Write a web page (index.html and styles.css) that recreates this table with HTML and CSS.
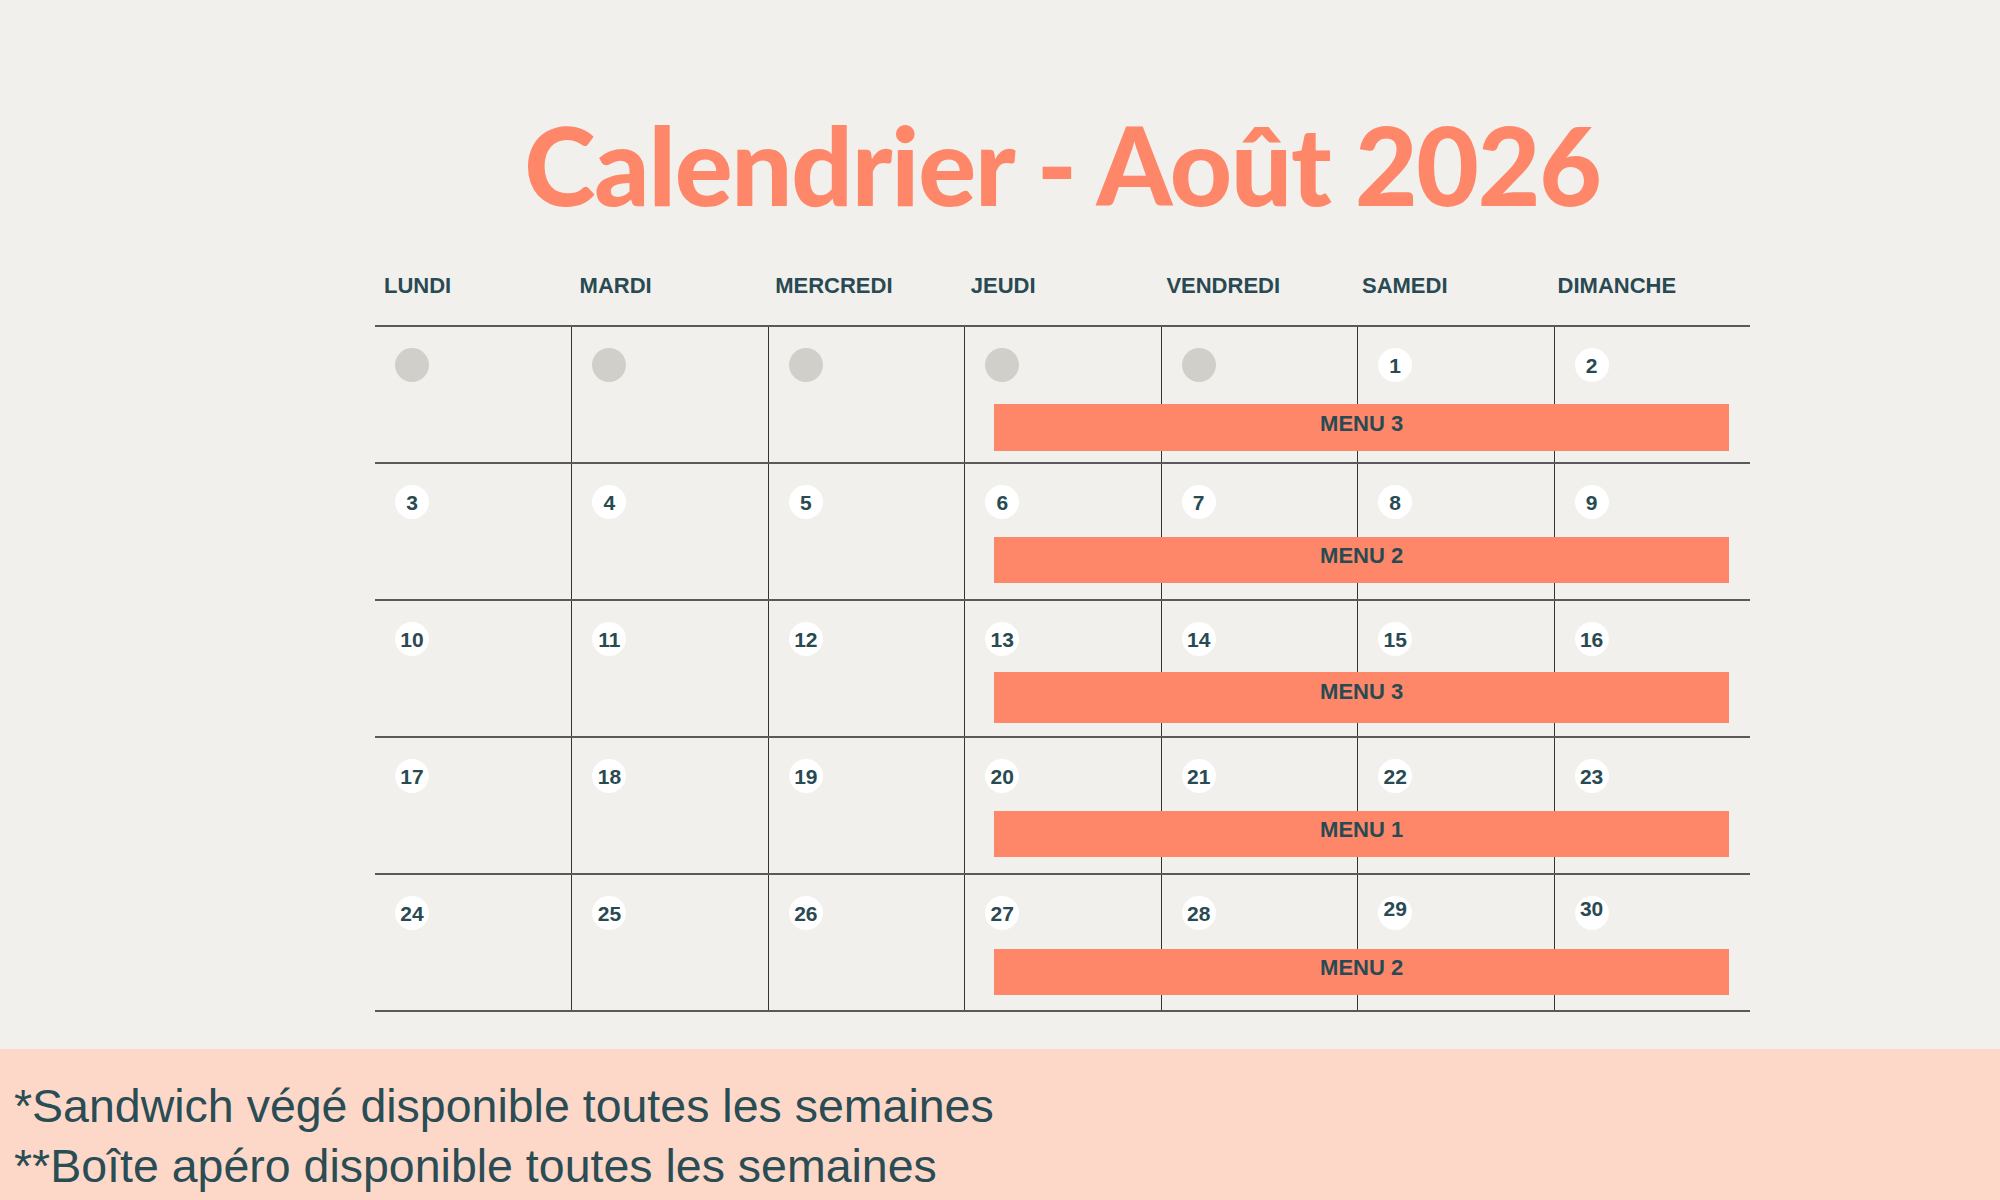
FILE: index.html
```html
<!DOCTYPE html>
<html lang="fr">
<head>
<meta charset="utf-8">
<title>Calendrier - Août 2026</title>
<link rel="stylesheet" href="styles.css">
</head>
<body>
<main class="page">
  <section class="calendar">
    <h1 class="title">Calendrier - Août 2026</h1>
    <div class="days">
      <div class="day-name">LUNDI</div>
      <div class="day-name">MARDI</div>
      <div class="day-name">MERCREDI</div>
      <div class="day-name">JEUDI</div>
      <div class="day-name">VENDREDI</div>
      <div class="day-name">SAMEDI</div>
      <div class="day-name">DIMANCHE</div>
    </div>
    <div class="weeks">
      <div class="week">
        <div class="cells">
          <div class="cell"><span class="num num--empty"></span></div>
          <div class="cell"><span class="num num--empty"></span></div>
          <div class="cell"><span class="num num--empty"></span></div>
          <div class="cell"><span class="num num--empty"></span></div>
          <div class="cell"><span class="num num--empty"></span></div>
          <div class="cell"><span class="num">1</span></div>
          <div class="cell"><span class="num">2</span></div>
        </div>
        <div class="menu menu--w1">MENU 3</div>
      </div>
      <div class="week">
        <div class="cells">
          <div class="cell"><span class="num">3</span></div>
          <div class="cell"><span class="num">4</span></div>
          <div class="cell"><span class="num">5</span></div>
          <div class="cell"><span class="num">6</span></div>
          <div class="cell"><span class="num">7</span></div>
          <div class="cell"><span class="num">8</span></div>
          <div class="cell"><span class="num">9</span></div>
        </div>
        <div class="menu menu--w2">MENU 2</div>
      </div>
      <div class="week">
        <div class="cells">
          <div class="cell"><span class="num">10</span></div>
          <div class="cell"><span class="num">11</span></div>
          <div class="cell"><span class="num">12</span></div>
          <div class="cell"><span class="num">13</span></div>
          <div class="cell"><span class="num">14</span></div>
          <div class="cell"><span class="num">15</span></div>
          <div class="cell"><span class="num">16</span></div>
        </div>
        <div class="menu menu--w3">MENU 3</div>
      </div>
      <div class="week">
        <div class="cells">
          <div class="cell"><span class="num">17</span></div>
          <div class="cell"><span class="num">18</span></div>
          <div class="cell"><span class="num">19</span></div>
          <div class="cell"><span class="num">20</span></div>
          <div class="cell"><span class="num">21</span></div>
          <div class="cell"><span class="num">22</span></div>
          <div class="cell"><span class="num">23</span></div>
        </div>
        <div class="menu menu--w4">MENU 1</div>
      </div>
      <div class="week">
        <div class="cells">
          <div class="cell"><span class="num">24</span></div>
          <div class="cell"><span class="num">25</span></div>
          <div class="cell"><span class="num">26</span></div>
          <div class="cell"><span class="num">27</span></div>
          <div class="cell"><span class="num">28</span></div>
          <div class="cell"><span class="num num--raised">29</span></div>
          <div class="cell"><span class="num num--raised">30</span></div>
        </div>
        <div class="menu menu--w5">MENU 2</div>
      </div>
    </div>
  </section>
  <footer class="notes">
    <p class="note">*Sandwich végé disponible toutes les semaines</p>
    <p class="note">**Boîte apéro disponible toutes les semaines</p>
  </footer>
</main>
</body>
</html>
```

FILE: styles.css
```css
html, body {
  margin: 0;
  padding: 0;
  background: #f2f0ec;
}

.page {
  width: 2000px;
  height: 1200px;
  display: flex;
  flex-direction: column;
  overflow: hidden;
  font-family: "Liberation Sans", Arial, sans-serif;
  color: #294a52;
}

.calendar {
  width: 1375px;
  margin-left: 375px;
  padding-top: 110px;
  height: 1013px;
  box-sizing: border-box;
}

.title {
  margin: 0;
  text-align: center;
  font-family: "Lato", "Liberation Sans", sans-serif;
  font-weight: 900;
  font-size: 108px;
  line-height: 108px;
  letter-spacing: -1.2px;
  color: #fe8769;
  height: 108px;
}

.days {
  display: grid;
  grid-template-columns: repeat(7, 195.6px);
  margin-top: 57px;
  padding: 0 0 28px 9px;
  border-bottom: 2px solid #5a5a5a;
}

.day-name {
  font-weight: 700;
  font-size: 22px;
  line-height: 22px;
  color: #294a52;
}

.week {
  display: grid;
  grid-template-columns: 1fr;
  grid-template-rows: 135px;
  border-bottom: 2px solid #5a5a5a;
}

.cells {
  grid-area: 1 / 1;
  display: grid;
  grid-template-columns: repeat(7, 1fr);
}

.cell {
  padding: 21px 0 0 20px;
  min-width: 0;
}

.cell + .cell {
  border-left: 1px solid #333;
}

.num {
  display: flex;
  align-items: center;
  justify-content: center;
  width: 34px;
  height: 34px;
  border-radius: 50%;
  background: #ffffff;
  font-weight: 700;
  font-size: 21px;
  line-height: 1;
  color: #294a52;
}

.num--empty {
  background: #d1cfca;
}

.num--raised {
  padding-bottom: 9px;
  box-sizing: border-box;
}

.menu {
  grid-area: 1 / 1;
  align-self: start;
  margin: 74px 21px 0 calc(300% / 7 + 30px);
  height: 46px;
  background: #fe8769;
  display: flex;
  align-items: center;
  justify-content: center;
  padding-bottom: 8px;
  box-sizing: border-box;
  font-weight: 700;
  font-size: 22px;
  line-height: 1;
  color: #294a52;
}

.menu--w1 { margin-top: 77px; height: 47px; }
.menu--w2 { margin-top: 73px; }
.menu--w3 { margin-top: 71px; height: 51px; padding-bottom: 11px; }
.menu--w4 { margin-top: 73px; }
.menu--w5 { margin-top: 74px; }

.notes {
  margin-top: 36px;
  flex: 1;
  background: #fdd8c8;
  padding: 27px 0 0 14px;
}

.note {
  margin: 0;
  font-size: 46.5px;
  line-height: 60px;
  color: #2a4c54;
}
```
